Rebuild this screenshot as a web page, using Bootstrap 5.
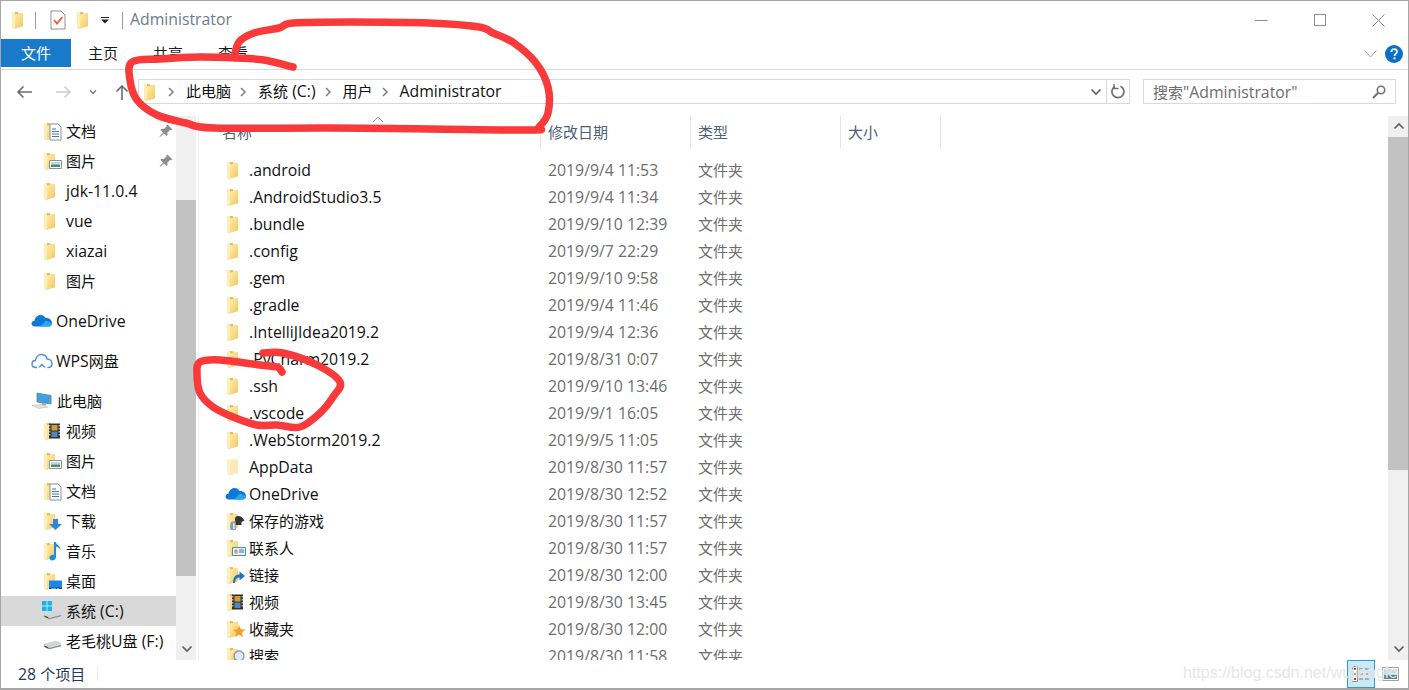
<!DOCTYPE html>
<html lang="zh-CN">
<head>
    <meta charset="UTF-8">
    <meta name="viewport" content="width=device-width, initial-scale=1.0">
    <title>Administrator</title>
    <link href="https://cdn.jsdelivr.net/npm/bootstrap@5.3.0/dist/css/bootstrap.min.css" rel="stylesheet">
    <style>
        html, body { height: 690px; overflow: hidden; background: #fff; }
        body { font-family: "Open Sans", "Noto Sans CJK SC", sans-serif; font-size: 15.8px; line-height: 20px; color: #1a1a1a; }
        .hz { font-size: 15px; }
        svg { display: block; flex: none; }
        .win { position: relative; width: 1409px; height: 690px; border: 1px solid #a6a6a6; border-width: 1px 1px 2px 1px; overflow: hidden; }

        .title-row { height: 38px; padding-left: 11px; }
        .title-sep { width: 1px; height: 17px; background: #9a9a9a; }
        .gap-11 { margin-left: 11px; }
        .gap-12 { margin-left: 12px; }
        .gap-13 { margin-left: 13px; }
        .gap-14 { margin-left: 14px; }
        .title-text { color: #6d7b8c; margin-left: 7px; padding-bottom: 2px; }
        .win-btns { margin-left: auto; padding-right: 23px; gap: 46px; }

        .ribbon-row { height: 31px; border-bottom: 1px solid #d9d9d9; }
        .file-tab { width: 70px; height: 28px; background: #1979ca; color: #fff; line-height: 28px; text-align: center; }
        .ribbon-tab { width: 30px; margin-left: 17px; margin-right: 18px; white-space: nowrap; height: 28px; line-height: 29px; }
        .ribbon-end { margin-left: auto; padding-right: 5px; gap: 8px; height: 30px; }

        .nav-row { height: 46px; padding-top: 9px; }
        .nav-btns { width: 137px; height: 25px; padding-left: 15px; }
        .nav-fwd { margin-left: 24px; }
        .nav-drop { margin-left: 17px; }
        .nav-up { margin-left: 18px; }
        .addr-box { width: 992px; height: 25px; border: 1px solid #d9d9d9; padding-left: 5px; }
        .addr-part { white-space: nowrap; color: #111; padding-bottom: 2px; }
        .addr-chev { margin-left: 8px; margin-right: 11px; }
        .addr-chev.first { margin-left: 11px; }
        .addr-tail { margin-left: auto; height: 23px; }
        .addr-refresh { width: 23px; height: 23px; border-left: 1px solid #d9d9d9; }
        .search-box { width: 253px; height: 25px; border: 1px solid #d9d9d9; margin-left: 13px; padding: 0 9px; color: #6d6d6d; }

        .main-row { height: 544px; }
        .side-pane { width: 175px; overflow: hidden; }
        .side-item { height: 30px; white-space: nowrap; color: #111; }
        .side-item.lvl { padding-left: 41px; }
        .side-item.top { padding-left: 30px; margin-top: 10px; }
        .side-item.now { background: #d9d9d9; }
        .side-name { margin-left: 2px; }
        .side-name.cloud { margin-left: 3px; }
        .side-name.pc { margin-left: 4px; }
        .side-name.disk { margin-left: 5px; }
        .side-pin { margin-left: auto; margin-right: 3px; }
        .drive-box { position: relative; width: 19px; height: 20px; }
        .drive-logo { position: absolute; left: 0; top: 0; }
        .drive-body { position: absolute; left: 1px; top: 8px; }
        .scroll-v { width: 20px; background: #f0f0f0; flex: none; position: relative; }
        .scroll-thumb { position: absolute; left: 0; right: 0; background: #c2c2c2; }
        .scroll-arrow { position: absolute; left: 5px; }
        .arrow-top { top: 6px; }
        .arrow-bottom { top: 529px; }
        .thumb-side { top: 84px; height: 376px; }
        .thumb-list { top: 21px; height: 333px; }
        .list-pane { width: 1190px; border-left: 1px solid #f0f0f0; margin-left: 2px; overflow: hidden; position: relative; }
        .list-head { height: 32px; padding-left: 23px; color: #4c607a; }
        .head-cell { height: 32px; border-right: 1px solid #e5e5e5; padding-top: 6px; padding-left: 7px; white-space: nowrap; width: 150px; }
        .head-name { width: 319px; padding-left: 0; }
        .head-size { width: 100px; }
        .sort-caret { position: absolute; left: 173px; top: 0; }
        .list-body { padding-top: 8px; }
        .file-row { height: 27px; padding-left: 26px; white-space: nowrap; }
        .file-name { width: 299px; color: #111; margin-left: 2px; }
        .file-date { width: 150px; color: #6d6d6d; }
        .file-type { color: #6d6d6d; }

        .status-row { height: 28px; padding-left: 17px; color: #1e395b; }
        .status-sep { width: 1px; height: 16px; background: #ececec; margin-left: 12px; }
        .view-on { width: 28px; height: 28px; background: #cce8f5; border: 1px solid #26a0da; margin-left: auto; }
        .view-off { margin-left: 7px; margin-right: 9px; }

        .ink-layer { position: absolute; left: -1px; top: -1px; pointer-events: none; }
        .mark-text { position: absolute; left: 1182px; top: 662px; color: #e6e6e6; font-family: "Liberation Sans", sans-serif; font-size: 16px; white-space: nowrap; }
    </style>
</head>
<body>
    <svg width="0" height="0" class="position-absolute">
        <defs>
            <linearGradient id="fg" x1="0" y1="0" x2="1" y2="1">
                <stop offset="0" stop-color="#ffeeb0"/>
                <stop offset="1" stop-color="#f5c658"/>
            </linearGradient>
            <symbol id="folder" viewBox="0 0 22 20">
                <path d="M2 2h6v1.500h5V16l-8 2.500H3.500L2 17z" fill="#e9bd5a"/>
                <path d="M5 4.500l8-1V16l-8 2.500z" fill="url(#fg)"/>
                <path d="M2 2h3v16H3.500L2 17z" fill="#fdeeb8"/>
            </symbol>
            <symbol id="folder-pale" viewBox="0 0 22 20">
                <path d="M2 2h11v14l-8 2.500H3.500L2 17z" fill="#fdf1c9"/>
                <path d="M5 4.500l8-1V16l-8 2.500z" fill="#fbe9b6"/>
            </symbol>
            <symbol id="ov-doc" viewBox="0 0 22 20">
                <path d="M8 3h8l3 3v13H8z" fill="#fff" stroke="#8f8f8f"/>
                <path d="M10 8h4M10 10.500h7M10 13h7M10 15.500h7" stroke="#2f7fc9" stroke-width="1.200"/>
            </symbol>
            <symbol id="ov-pic" viewBox="0 0 22 20">
                <path d="M7.500 9.500h12v8h-12z" fill="#fff" stroke="#8f8f8f"/>
                <path d="M9 11h9v2.500H9z" fill="#b6d9ef"/>
                <path d="M9 13.500h9V16H9z" fill="#4f8a6a"/>
            </symbol>
            <symbol id="ov-video" viewBox="0 0 22 20">
                <path d="M7 2.500h11v15H7z" fill="#333"/>
                <path d="M9.500 4h6v5.500h-6z" fill="#d59a36"/>
                <path d="M9.500 10.500h6V16h-6z" fill="#4a8bb8"/>
                <path d="M7.800 4v1.500M7.800 7v1.500M7.800 10v1.500M7.800 13v1.500M17.200 4v1.500M17.200 7v1.500M17.200 10v1.500M17.200 13v1.500" stroke="#eee"/>
            </symbol>
            <symbol id="ov-down" viewBox="0 0 22 20">
                <path d="M11 8h5v5h4l-6.500 6L7 13h4z" fill="#2f86d6"/>
            </symbol>
            <symbol id="ov-music" viewBox="0 0 22 20">
                <path d="M12 1h1.800c.5 3 4.700 3.500 4.700 8-1-1.800-2.500-3-4.500-3.200V16c0 2-1.700 3.500-3.800 3.500S7.500 18.300 7.500 16.500 9.500 13.500 12 13.800z" fill="#1d8fe3"/>
            </symbol>
            <symbol id="ov-desk" viewBox="0 0 22 20">
                <path d="M7 9.500h13V18H7z" fill="#1b87e6"/>
                <path d="M7 16.500h13V18H7z" fill="#0f4f8f"/>
                <path d="M9 17h5v.6H9zM15 17h2v.6h-2z" fill="#dbeeff"/>
            </symbol>
            <symbol id="ov-game" viewBox="0 0 22 20">
                <path d="M13 5c3 0 5 2 6.500 4.500l-3 1.500V14h-6v-3C9.500 8 10 5 13 5z" fill="#333"/>
                <path d="M6 11l4-1 1 9H6c-1.500-3-1-5 0-8z" fill="#7f9fc0"/>
                <path d="M8 12h1.500v6H8z" fill="#dfe8f2"/>
            </symbol>
            <symbol id="ov-card" viewBox="0 0 22 20">
                <path d="M7.500 9.500h13v8h-13z" fill="#eaf4fb" stroke="#3f8ec4"/>
                <path d="M9.500 11.500h3v4h-3z" fill="#d88f5c"/>
                <path d="M14 12h5M14 14h5" stroke="#3f6f98"/>
            </symbol>
            <symbol id="ov-link" viewBox="0 0 22 20">
                <path d="M8 18c0-6 2.500-8.500 6.500-8.500V6.500L20 11l-5.500 4.500V12.500C11.500 12.500 10 14.500 10 18z" fill="#1f74c9"/>
            </symbol>
            <symbol id="ov-star" viewBox="0 0 22 20">
                <path d="M14 6l1.800 4.300 4.700.3-3.600 3 1.200 4.600L14 15.700l-4.100 2.500 1.200-4.600-3.600-3 4.700-.3z" fill="#f59b2d" stroke="#ffd98a" stroke-width=".5"/>
            </symbol>
            <symbol id="ov-find" viewBox="0 0 22 20">
                <circle cx="14" cy="10" r="5" fill="#dcecf6" stroke="#8a9aa6" stroke-width="1.400"/>
                <path d="M10.500 13.500L7 17.500" stroke="#8a9aa6" stroke-width="2"/>
            </symbol>
            <symbol id="onedrive" viewBox="0 0 22 14">
                <path d="M9 12.500H4C1.500 12.500 .5 11 .5 9.500S1.800 6.800 3.500 6.800C4 3.500 6.500 1 9.500 1c2.300 0 4 1.100 5 3 3-.3 6.500 1.500 6.500 5 0 2.200-1.500 3.500-3.500 3.500z" fill="#0f78d4"/>
                <path d="M9 12.500l6-6 6 3c0 2-1.500 3-3.500 3z" fill="#28a8ea"/>
            </symbol>
            <symbol id="wps" viewBox="0 0 22 16">
                <path d="M6 14.500H5C2.500 14.500 1 13 1 11s1.500-3.500 3.500-3.500C5 4 7.500 1.500 10.500 1.500c2.800 0 5 1.800 5.700 4.500 2.800 0 4.800 2 4.800 4.400 0 2.400-1.900 4.100-4.500 4.100" fill="none" stroke="#4d8de8" stroke-width="1.500"/>
                <path d="M7 14.500l4-4 4 4-2 0-2-2-2 2z" fill="#4d8de8"/>
            </symbol>
            <symbol id="pc" viewBox="0 0 22 18">
                <path d="M6 1l14 2.500v8.500L6 10z" fill="#3fa2e0" stroke="#6b7f8f" stroke-width=".8"/>
                <path d="M11 11l4 .6v2l-4-.6z" fill="#9aa5ad"/>
                <path d="M1 13.500l9-1 7 2.500-9 1.500z" fill="#e1e1e1" stroke="#bcbcbc" stroke-width=".6"/>
            </symbol>
            <symbol id="drive" viewBox="0 0 22 12">
                <path d="M1 5.500L15 1.500l6 3v3.500L7 11.500 1 8.500z" fill="#d4d6d6"/>
                <path d="M1 7l6 3 14-3.500v1.500L7 11.500 1 8.500z" fill="#8a8f90"/>
                <path d="M2 7.500l4 1.800v1L2 8.500z" fill="#333"/>
            </symbol>
            <symbol id="win-logo" viewBox="0 0 10 10">
                <path d="M0 0h4.500v4.500H0zM5.500 0H10v4.500H5.500zM0 5.500h4.500V10H0zM5.500 5.500H10V10H5.500z" fill="#12b5f0"/>
            </symbol>
            <symbol id="chev-right" viewBox="0 0 8 12">
                <path d="M2 2l4 4-4 4" fill="none" stroke="#808080" stroke-width="1.600"/>
            </symbol>
            <symbol id="chev-down" viewBox="0 0 12 8">
                <path d="M1.500 1.500L6 6l4.500-4.500" fill="none" stroke="#606060" stroke-width="1.700"/>
            </symbol>
            <symbol id="chev-up" viewBox="0 0 12 8">
                <path d="M1.500 6.500L6 2l4.500 4.500" fill="none" stroke="#606060" stroke-width="1.700"/>
            </symbol>
            <symbol id="pin" viewBox="0 0 14 14">
                <path d="M8.500 .5l5 5-1.500.8-1-.3-2.700 2.700.3 2.300-1.100 1.100-2.600-2.600L1 13l-.5-.5 3.500-4-2.600-2.600 1.100-1.100 2.300.3L7.500 2.400l-.3-1z" fill="#8b8f94"/>
            </symbol>
        </defs>
    </svg>

    <div class="win">
        <div class="title-row d-flex align-items-center">
            <svg width="12" height="18" viewBox="2 1 12 18"><use href="#folder" width="22" height="20"/></svg>
            <div class="title-sep gap-11"></div>
            <svg class="gap-14" width="16" height="20" viewBox="0 0 16 20"><path d="M1 1h10l4 4v14H1z" fill="#fff" stroke="#8f8f8f"/><path d="M4 10l3 3.500 5.500-6.500" fill="none" stroke="#e8602c" stroke-width="1.800"/></svg>
            <svg class="gap-11" width="12" height="18" viewBox="2 1 12 18"><use href="#folder" width="22" height="20"/></svg>
            <svg class="gap-12" width="8" height="8" viewBox="0 0 8 8"><path d="M0 1h8v1H0zM0 3.500h8L4 7.500z" fill="#222"/></svg>
            <div class="title-sep gap-13"></div>
            <div class="title-text">Administrator</div>
            <div class="win-btns d-flex align-items-center">
                <svg width="13" height="13" viewBox="0 0 13 13"><path d="M0 6.500h12.500" stroke="#8a8a8a"/></svg>
                <svg width="12" height="12" viewBox="0 0 12 12"><path d="M.5.500h11v11H.500z" fill="none" stroke="#8a8a8a"/></svg>
                <svg width="13" height="13" viewBox="0 0 13 13"><path d="M.5.500l12 12M12.500.500l-12 12" stroke="#8a8a8a"/></svg>
            </div>
        </div>

        <div class="ribbon-row d-flex">
            <div class="file-tab">文件</div>
            <div class="ribbon-tab">主页</div>
            <div class="ribbon-tab">共享</div>
            <div class="ribbon-tab">查看</div>
            <div class="ribbon-end d-flex align-items-center">
                <svg width="13" height="8" viewBox="0 0 13 8"><path d="M.5.500L6.500 7l6-6.500" fill="none" stroke="#a0a0a0"/></svg>
                <svg width="18" height="18" viewBox="0 0 18 18"><circle cx="9" cy="9" r="9" fill="#0a6fc9"/><path d="M6.300 7c0-1.700 1.200-2.800 2.900-2.800S12 5.200 12 6.700c0 2.200-2.500 2.100-2.500 4.300" fill="none" stroke="#fff" stroke-width="1.700"/><path d="M8.500 12.300h2v2h-2z" fill="#fff"/></svg>
            </div>
        </div>

        <div class="nav-row d-flex">
            <div class="nav-btns d-flex align-items-center">
                <svg width="16" height="14" viewBox="0 0 16 14"><path d="M16 7H2M7.500 1.500L2 7l5.500 5.500" fill="none" stroke="#6d6d6d" stroke-width="1.600"/></svg>
                <svg class="nav-fwd" width="16" height="14" viewBox="0 0 16 14"><path d="M0 7h14M8.500 1.500L14 7l-5.500 5.500" fill="none" stroke="#d0d0d0" stroke-width="1.600"/></svg>
                <svg class="nav-drop" width="8" height="6" viewBox="0 0 12 8"><use href="#chev-down" width="12" height="8"/></svg>
                <svg class="nav-up" width="14" height="16" viewBox="0 0 14 16"><path d="M7 16V2M1.500 7.500L7 2l5.500 5.500" fill="none" stroke="#6d6d6d" stroke-width="1.600"/></svg>
            </div>
            <div class="addr-box d-flex align-items-center">
                <svg width="12" height="18" viewBox="2 1 12 18"><use href="#folder" width="22" height="20"/></svg>
                <svg class="addr-chev first" width="8" height="12"><use href="#chev-right"/></svg>
                <span class="addr-part">此电脑</span>
                <svg class="addr-chev" width="8" height="12"><use href="#chev-right"/></svg>
                <span class="addr-part">系统 (C:)</span>
                <svg class="addr-chev" width="8" height="12"><use href="#chev-right"/></svg>
                <span class="addr-part">用户</span>
                <svg class="addr-chev" width="8" height="12"><use href="#chev-right"/></svg>
                <span class="addr-part">Administrator</span>
                <div class="addr-tail d-flex align-items-center">
                    <svg class="me-1" width="12" height="8"><use href="#chev-down"/></svg>
                    <div class="addr-refresh d-flex align-items-center justify-content-center">
                        <svg width="15" height="15" viewBox="0 0 15 15"><path d="M9.500 2.200A6 6 0 1 1 4 2.400" fill="none" stroke="#707070" stroke-width="1.700"/><path d="M3 0v4.500h4.500" fill="none" stroke="#707070" stroke-width="1.400"/></svg>
                    </div>
                </div>
            </div>
            <div class="search-box d-flex align-items-center justify-content-between">
                <span>搜索"Administrator"</span>
                <svg width="14" height="14" viewBox="0 0 14 14"><circle cx="9" cy="5" r="3.700" fill="none" stroke="#707070" stroke-width="1.600"/><path d="M6.200 7.800L1 13" stroke="#707070" stroke-width="2"/></svg>
            </div>
        </div>

        <div class="main-row d-flex">
            <div class="side-pane" id="sidePane"></div>
            <div class="scroll-v">
                <div class="scroll-thumb thumb-side"></div>
                <svg class="scroll-arrow arrow-bottom" width="12" height="8"><use href="#chev-down"/></svg>
            </div>
            <div class="list-pane">
                <svg class="sort-caret" width="12" height="8" viewBox="0 0 12 8"><path d="M1 6l5-5 5 5" fill="none" stroke="#9a9a9a"/></svg>
                <div class="list-head d-flex">
                    <div class="head-cell head-name">名称</div>
                    <div class="head-cell">修改日期</div>
                    <div class="head-cell">类型</div>
                    <div class="head-cell head-size">大小</div>
                </div>
                <div class="list-body" id="fileList"></div>
            </div>
            <div class="scroll-v ms-auto">
                <svg class="scroll-arrow arrow-top" width="12" height="8"><use href="#chev-up"/></svg>
                <div class="scroll-thumb thumb-list"></div>
                <svg class="scroll-arrow arrow-bottom" width="12" height="8"><use href="#chev-down"/></svg>
            </div>
        </div>

        <div class="status-row d-flex align-items-center">
            <span>28 个项目</span>
            <div class="status-sep"></div>
            <div class="view-on d-flex align-items-center justify-content-center">
                <svg width="18" height="16" viewBox="0 0 18 16"><path d="M.5.500h5v15h-5z" fill="#fff" stroke="#8f8f8f"/><path d="M2 2h2v2H2z" fill="#666"/><path d="M2 7h2v2H2z" fill="#b59a3a"/><path d="M2 12h2v2H2z" fill="#b03a2a"/><path d="M7 3h4M13 3h4M7 8h4M13 8h4M7 13h4M13 13h4" stroke="#777"/></svg>
            </div>
            <svg class="view-off" width="17" height="14" viewBox="0 0 17 14"><path d="M.5.500h16v13H.5z" fill="#fff" stroke="#a0a0a0"/><path d="M2 2h13v6H2z" fill="#bcdcf2"/><path d="M2 8h13v4H2z" fill="#4f8a7a"/></svg>
        </div>

        <div class="mark-text">https://blog.csdn.net/wujiangle</div>
        <svg class="ink-layer" width="1409" height="690" id="inkLayer"></svg>
    </div>

    <script src="https://cdn.jsdelivr.net/npm/bootstrap@5.3.0/dist/js/bootstrap.bundle.min.js"></script>
    <script>
        const useIcon = (id) => `<use href="#${id}" width="22" height="20"/>`;
        const folderIcon = (over) => `<svg width="22" height="20" viewBox="0 0 22 20">${useIcon('folder')}${over ? useIcon(over) : ''}</svg>`;

        // левая панель
        const sideItems = [
            { name: '文档', over: 'ov-doc', pin: true },
            { name: '图片', over: 'ov-pic', pin: true },
            { name: 'jdk-11.0.4' },
            { name: 'vue' },
            { name: 'xiazai' },
            { name: '图片' },
            { name: 'OneDrive', top: 'onedrive', h: 14, cls: 'cloud' },
            { name: 'WPS网盘', top: 'wps', h: 16, cls: 'cloud' },
            { name: '此电脑', top: 'pc', h: 18, cls: 'pc' },
            { name: '视频', over: 'ov-video' },
            { name: '图片', over: 'ov-pic' },
            { name: '文档', over: 'ov-doc' },
            { name: '下载', over: 'ov-down' },
            { name: '音乐', over: 'ov-music' },
            { name: '桌面', over: 'ov-desk' },
            { name: '系统 (C:)', drive: true, now: true },
            { name: '老毛桃U盘 (F:)', drive: true }
        ];

        document.getElementById('sidePane').innerHTML = sideItems.map(item => {
            if (item.top) {
                return `<div class="side-item top d-flex align-items-center">
                    <svg width="22" height="${item.h}"><use href="#${item.top}"/></svg>
                    <span class="side-name ${item.cls}">${item.name}</span></div>`;
            }
            if (item.drive) {
                const logo = item.now ? '<svg class="drive-logo" width="10" height="10"><use href="#win-logo"/></svg>' : '';
                return `<div class="side-item lvl d-flex align-items-center ${item.now ? 'now' : ''}">
                    <div class="drive-box">${logo}
                    <svg class="drive-body" width="19" height="11"><use href="#drive"/></svg></div>
                    <span class="side-name disk">${item.name}</span></div>`;
            }
            const pin = item.pin ? '<svg class="side-pin" width="14" height="14"><use href="#pin"/></svg>' : '';
            return `<div class="side-item lvl d-flex align-items-center">${folderIcon(item.over)}
                <span class="side-name">${item.name}</span>${pin}</div>`;
        }).join('');

        // список файлов
        const files = [
            ['.android', '2019/9/4 11:53'],
            ['.AndroidStudio3.5', '2019/9/4 11:34'],
            ['.bundle', '2019/9/10 12:39'],
            ['.config', '2019/9/7 22:29'],
            ['.gem', '2019/9/10 9:58'],
            ['.gradle', '2019/9/4 11:46'],
            ['.IntelliJIdea2019.2', '2019/9/4 12:36'],
            ['.PyCharm2019.2', '2019/8/31 0:07'],
            ['.ssh', '2019/9/10 13:46'],
            ['.vscode', '2019/9/1 16:05'],
            ['.WebStorm2019.2', '2019/9/5 11:05'],
            ['AppData', '2019/8/30 11:57', 'pale'],
            ['OneDrive', '2019/8/30 12:52', 'cloud'],
            ['保存的游戏', '2019/8/30 11:57', 'ov-game'],
            ['联系人', '2019/8/30 11:57', 'ov-card'],
            ['链接', '2019/8/30 12:00', 'ov-link'],
            ['视频', '2019/8/30 13:45', 'ov-video'],
            ['收藏夹', '2019/8/30 12:00', 'ov-star'],
            ['搜索', '2019/8/30 11:58', 'ov-find']
        ];

        function fileIcon(kind) {
            if (kind === 'cloud') return '<svg width="22" height="14"><use href="#onedrive"/></svg>';
            if (kind === 'pale') return `<svg width="22" height="20" viewBox="0 0 22 20">${useIcon('folder-pale')}</svg>`;
            return folderIcon(kind);
        }

        document.getElementById('fileList').innerHTML = files.map(([name, date, kind]) => `
            <div class="file-row d-flex align-items-center">
                ${fileIcon(kind)}
                <div class="file-name">${name}</div>
                <div class="file-date">${date}</div>
                <div class="file-type">文件夹</div>
            </div>`).join('');

        // иероглифы чуть мельче латиницы
        const walker = document.createTreeWalker(document.querySelector('.win'), NodeFilter.SHOW_TEXT);
        const textNodes = [];
        while (walker.nextNode()) textNodes.push(walker.currentNode);
        for (const node of textNodes) {
            if (!/[\u4e00-\u9fff]/.test(node.nodeValue)) continue;
            const holder = document.createElement('span');
            holder.innerHTML = node.nodeValue.replace(/[\u4e00-\u9fff]+/g, '<span class="hz">$&</span>');
            node.replaceWith(...holder.childNodes);
        }

        // красные пометки от руки, сглаживание Catmull-Rom
        function smoothPath(pts) {
            let d = `M${pts[0][0]} ${pts[0][1]}`;
            for (let i = 0; i < pts.length - 1; i++) {
                const p0 = pts[i - 1] || pts[i], p1 = pts[i], p2 = pts[i + 1], p3 = pts[i + 2] || p2;
                const c1 = [p1[0] + (p2[0] - p0[0]) / 6, p1[1] + (p2[1] - p0[1]) / 6];
                const c2 = [p2[0] - (p3[0] - p1[0]) / 6, p2[1] - (p3[1] - p1[1]) / 6];
                d += `C${c1[0]} ${c1[1]} ${c2[0]} ${c2[1]} ${p2[0]} ${p2[1]}`;
            }
            return d;
        }

        const strokes = [
            [[293,67],[264,60],[236,58],[200,57],[160,59],[132,62],[130,80],[137,100],[157,115],[186,123],[214,128],[330,128],[430,129],[532,130],[539,127],[548,113],[548,87],[536,63],[514,43],[493,33],[479,27],[429,23],[350,22],[293,23],[279,28],[254,33],[239,42],[234,58]],
            [[263,353],[283,353],[317,365],[340,382],[333,397],[320,413],[300,427],[277,425],[257,425],[233,417],[213,407],[200,393],[197,373],[200,362],[220,360],[260,365],[277,367],[282,372]]
        ];

        document.getElementById('inkLayer').innerHTML = strokes.map(pts =>
            `<path d="${smoothPath(pts)}" fill="none" stroke="#fa3a3a" stroke-width="7.500" stroke-linecap="round" stroke-linejoin="round"/>`
        ).join('');
    </script>
</body>
</html>
